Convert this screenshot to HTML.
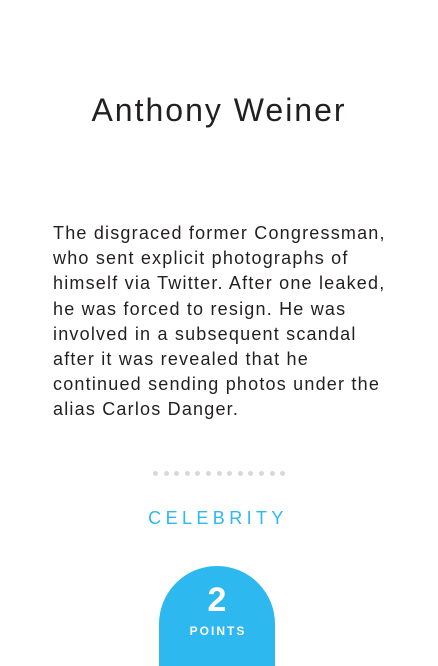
<!DOCTYPE html>
<html><head><style>
body{margin:0;width:438px;height:664px;background:#fff;overflow:hidden;font-family:"Liberation Sans",sans-serif;position:relative;color:#231f20}
h1{position:absolute;top:90px;left:0;width:438px;text-align:center;margin:0;font-weight:400;font-size:32px;line-height:40px;letter-spacing:2px;white-space:nowrap}
p{position:absolute;top:221px;left:53px;width:380px;margin:0;font-size:18px;line-height:25.2px;letter-spacing:1.2px;white-space:nowrap}
.dots{position:absolute;top:471px;left:153px;display:flex;gap:5.6px}
.dots i{width:5px;height:5px;border-radius:50%;background:#d8d8d8;display:block}
.cat{position:absolute;top:508px;left:-1px;width:438px;text-align:center;color:#2db8ef;font-size:18px;letter-spacing:4.4px;font-weight:400}
.pill{position:absolute;top:566px;left:159px;width:116px;height:100px;background:#2db8ef;border-radius:58px 58px 0 0;color:#fff;text-align:center}
.n{font-size:34px;font-weight:700;margin-top:16px;line-height:36px}
.pt{font-size:12px;font-weight:700;letter-spacing:2px;margin-top:6px;padding-left:2px}
</style></head><body>
<h1>Anthony Weiner</h1>
<p>The disgraced former Congressman,<br>who sent explicit photographs of<br>himself via Twitter. After one leaked,<br>he was forced to resign. He was<br>involved in a subsequent scandal<br>after it was revealed that he<br>continued sending photos under the<br>alias Carlos Danger.</p>
<div class="dots"><i></i><i></i><i></i><i></i><i></i><i></i><i></i><i></i><i></i><i></i><i></i><i></i><i></i></div>
<div class="cat">CELEBRITY</div>
<div class="pill"><div class="n">2</div><div class="pt">POINTS</div></div>
</body></html>
